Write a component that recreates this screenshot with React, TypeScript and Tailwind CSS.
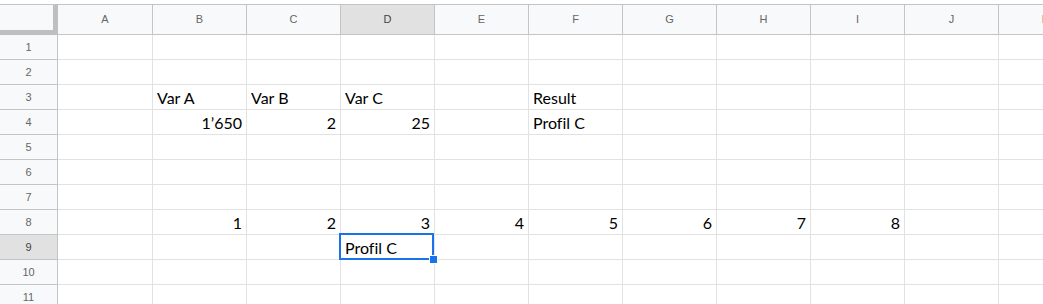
import React from "react";

const cols = ["A", "B", "C", "D", "E", "F", "G", "H", "I", "J", "K"];
const widths = [95, 94, 94, 94, 94, 94, 94, 94, 94, 94, 94];

type Cell = { text: string; right?: boolean };
const data: Record<number, Record<string, Cell>> = {
  3: { B: { text: "Var A" }, C: { text: "Var B" }, D: { text: "Var C" }, F: { text: "Result" } },
  4: {
    B: { text: "1\u2019650", right: true },
    C: { text: "2", right: true },
    D: { text: "25", right: true },
    F: { text: "Profil C" },
  },
  8: {
    B: { text: "1", right: true },
    C: { text: "2", right: true },
    D: { text: "3", right: true },
    E: { text: "4", right: true },
    F: { text: "5", right: true },
    G: { text: "6", right: true },
    H: { text: "7", right: true },
    I: { text: "8", right: true },
  },
  9: { D: { text: "Profil C" } },
};

export default function App() {
  return (
    <div className="w-[1043px] h-[304px] overflow-hidden bg-white">
      <div className="h-[4px]" />
      {/* header */}
      <div className="flex h-[31px] border-t border-[#c4c4c4]">
        <div className="w-[58px] shrink-0 bg-[#f8f9fa] border-r-[5px] border-b-[5px] border-[#bfbfbf]" />
        {cols.map((c, i) => (
          <div
            key={c}
            style={{ width: widths[i] }}
            className={`shrink-0 flex items-center justify-center border-r border-b border-[#c4c4c4] text-[11px] font-['Liberation_Sans',Arial,sans-serif] ${
              c === "D" ? "bg-[#e1e1e1] text-[#444]" : "bg-[#f8f9fa] text-[#666]"
            }`}
          >
            {c}
          </div>
        ))}
      </div>
      {Array.from({ length: 11 }, (_, r) => r + 1).map((r) => (
        <div key={r} className="flex h-[25px]">
          <div
            className={`w-[58px] shrink-0 flex items-center justify-center border-r border-b border-[#c4c4c4] text-[11px] font-['Liberation_Sans',Arial,sans-serif] ${
              r === 9 ? "bg-[#e1e1e1] text-[#444]" : "bg-[#f8f9fa] text-[#666]"
            }`}
          >
            {r}
          </div>
          {cols.map((c, i) => {
            const cell = data[r]?.[c];
            const selected = r === 9 && c === "D";
            return (
              <div
                key={c}
                style={{ width: widths[i] }}
                className={`relative shrink-0 flex items-end px-[4px] pb-[2px] border-r border-b border-[#e2e2e2] text-[16px] leading-[18px] text-black font-['Lato','Open_Sans',sans-serif] [font-variant-ligatures:none] ${
                  cell?.right ? "justify-end" : "justify-start"
                } ${selected ? "z-10" : ""}`}
              >
                {cell?.text}
                {selected && (
                  <>
                    <div className="absolute -left-[2px] -top-[2px] w-[95px] h-[27px] border-2 border-[#1a73e8]" />
                    <div className="absolute -right-[4px] -bottom-[5px] w-[9px] h-[9px] bg-[#1a73e8] border border-white" />
                  </>
                )}
              </div>
            );
          })}
        </div>
      ))}
    </div>
  );
}
